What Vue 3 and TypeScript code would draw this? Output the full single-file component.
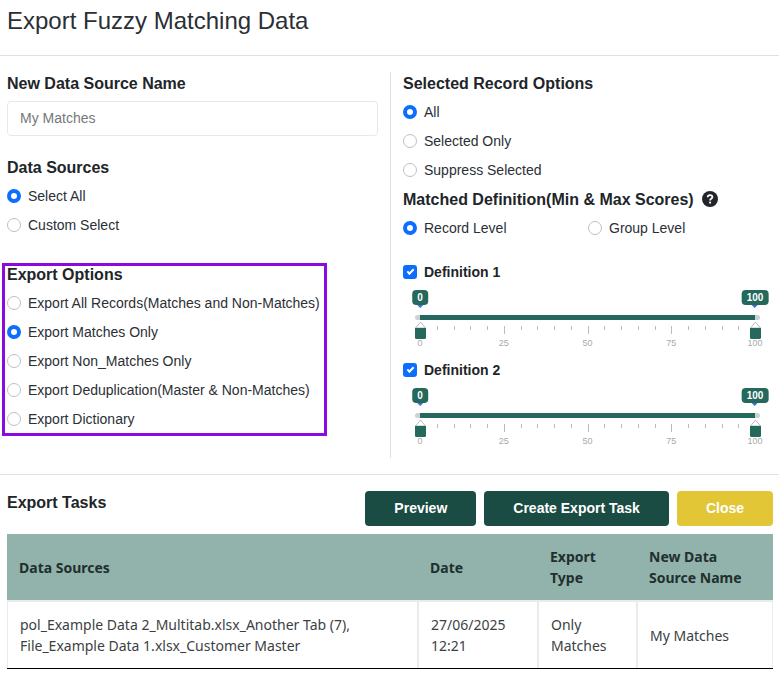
<script setup lang="ts">
import { reactive, ref } from 'vue'

interface Definition {
  id: number
  enabled: boolean
  min: number
  max: number
}

interface ExportTask {
  sources: string[]
  date: string
  type: string
  name: string
}

const sourceName = ref('')
const dataSource = ref('Select All')
const exportOption = ref('Export Matches Only')
const recordOption = ref('All')
const level = ref('Record Level')

const dataSources = ['Select All', 'Custom Select']
const exportOptions = [
  'Export All Records(Matches and Non-Matches)',
  'Export Matches Only',
  'Export Non_Matches Only',
  'Export Deduplication(Master & Non-Matches)',
  'Export Dictionary',
]
const recordOptions = ['All', 'Selected Only', 'Suppress Selected']
const levels = ['Record Level', 'Group Level']

const definitions = reactive<Definition[]>([
  { id: 1, enabled: true, min: 0, max: 100 },
  { id: 2, enabled: true, min: 0, max: 100 },
])

const ticks = Array.from({ length: 21 }, (_, i) => i * 5)

const tasks: ExportTask[] = [
  {
    sources: ['pol_Example Data 2_Multitab.xlsx_Another Tab (7),', 'File_Example Data 1.xlsx_Customer Master'],
    date: '27/06/2025 12:21',
    type: 'Only Matches',
    name: 'My Matches',
  },
]
</script>

<template>
  <main class="page">
    <header class="title-bar">
      <h1>Export Fuzzy Matching Data</h1>
    </header>

    <form class="columns" @submit.prevent>
      <div class="column left">
        <label class="heading" for="source-name">New Data Source Name</label>
        <input id="source-name" v-model="sourceName" class="text-box" type="text" placeholder="My Matches" />

        <fieldset class="sources">
          <legend class="heading">Data Sources</legend>
          <label v-for="o in dataSources" :key="o" class="option">
            <input v-model="dataSource" type="radio" name="data-source" :value="o" />
            <span>{{ o }}</span>
          </label>
        </fieldset>

        <fieldset class="highlight">
          <legend class="heading">Export Options</legend>
          <label v-for="o in exportOptions" :key="o" class="option">
            <input v-model="exportOption" type="radio" name="export-option" :value="o" />
            <span>{{ o }}</span>
          </label>
        </fieldset>
      </div>

      <div class="column right">
        <fieldset>
          <legend class="heading">Selected Record Options</legend>
          <label v-for="o in recordOptions" :key="o" class="option">
            <input v-model="recordOption" type="radio" name="record-option" :value="o" />
            <span>{{ o }}</span>
          </label>
        </fieldset>

        <fieldset class="matched">
          <legend class="heading with-icon">
            <span>Matched Definition(Min &amp; Max Scores)</span>
            <svg class="help" viewBox="0 0 16 16" aria-hidden="true">
              <circle cx="8" cy="8" r="8" fill="#212529" />
              <path d="M5.7 6.3C5.7 4.9 6.7 4.1 8 4.1s2.4.8 2.4 2c0 1.7-2.3 1.7-2.3 3.3" fill="none" stroke="#fff" stroke-width="1.8" />
              <circle cx="8.1" cy="11.6" r="1.1" fill="#fff" />
            </svg>
          </legend>
          <div class="levels">
            <label v-for="o in levels" :key="o" class="option">
              <input v-model="level" type="radio" name="level" :value="o" />
              <span>{{ o }}</span>
            </label>
          </div>
        </fieldset>

        <section v-for="d in definitions" :key="d.id" class="definition">
          <label class="option strong">
            <input v-model="d.enabled" type="checkbox" />
            <span>Definition {{ d.id }}</span>
          </label>
          <div class="slider">
            <div class="rail">
              <div class="fill" :style="{ left: d.min + '%', right: 100 - d.max + '%' }"></div>
              <output class="bubble" :style="{ left: d.min + '%' }">{{ d.min }}</output>
              <output class="bubble" :style="{ left: d.max + '%' }">{{ d.max }}</output>
              <template v-for="t in ticks" :key="t">
                <i class="tick" :class="{ major: t % 25 === 0 }" :style="{ left: t + '%' }"></i>
                <span v-if="t % 25 === 0" class="mark" :style="{ left: t + '%' }">{{ t }}</span>
              </template>
              <svg v-for="(v, i) in [d.min, d.max]" :key="i" class="thumb" :style="{ left: v + '%' }" viewBox="0 0 11 18">
                <path d="M.5 7 5.5 1l5 6z" fill="#fff" stroke="#b9b9c0" />
                <path d="M0 7h11v9.500a1.5 1.5 0 0 1-1.5 1.5h-8A1.5 1.5 0 0 1 0 16.500z" fill="#24695c" />
              </svg>
              <input v-model.number="d.min" class="range" type="range" min="0" max="100" :aria-label="`Definition ${d.id} minimum score`" />
              <input v-model.number="d.max" class="range" type="range" min="0" max="100" :aria-label="`Definition ${d.id} maximum score`" />
            </div>
          </div>
        </section>
      </div>
    </form>

    <section class="tasks">
      <div class="task-bar">
        <h2 class="heading">Export Tasks</h2>
        <div class="actions">
          <button type="button" class="btn">Preview</button>
          <button type="button" class="btn">Create Export Task</button>
          <button type="button" class="btn close">Close</button>
        </div>
      </div>
      <table>
        <colgroup>
          <col />
          <col class="c-date" />
          <col class="c-type" />
          <col class="c-name" />
        </colgroup>
        <thead>
          <tr>
            <th scope="col">Data Sources</th>
            <th scope="col">Date</th>
            <th scope="col">Export Type</th>
            <th scope="col">New Data Source Name</th>
          </tr>
        </thead>
        <tbody>
          <tr v-for="t in tasks" :key="t.date">
            <td><div v-for="s in t.sources" :key="s">{{ s }}</div></td>
            <td>{{ t.date }}</td>
            <td>{{ t.type }}</td>
            <td>{{ t.name }}</td>
          </tr>
        </tbody>
      </table>
    </section>
  </main>
</template>

<style>
body {
  background: #fff;
}
</style>

<style scoped>
.page {
  font-family: 'Liberation Sans', Arial, sans-serif;
  font-size: 14px;
  color: #2b2f36;
}
.page *,
.page *::before,
.page *::after {
  box-sizing: border-box;
}
.title-bar {
  padding: 5px 7px 18px;
  border-bottom: 1px solid #dee2e6;
}
h1 {
  margin: 0;
  font-size: 24px;
  font-weight: 400;
  line-height: 32px;
}
.heading {
  display: block;
  margin: 0;
  padding: 0 0 4px;
  font-size: 16px;
  font-weight: 700;
  line-height: 18px;
  color: #212529;
}
.columns {
  display: grid;
  grid-template-columns: 390fr 389fr;
  padding: 16px 0;
  border-bottom: 1px solid #dee2e6;
}
.column {
  padding-top: 3px;
}
.left {
  padding-left: 7px;
  padding-right: 12px;
}
.right {
  padding-left: 12px;
  padding-right: 6px;
  padding-bottom: 5px;
  border-left: 1px solid #dee2e6;
}
fieldset {
  min-width: 0;
  margin: 0;
  padding: 0;
  border: 0;
}
.text-box {
  display: block;
  width: 100%;
  height: 35px;
  margin-top: 4px;
  padding: 0 12px 2px;
  border: 1px solid #e6e9ec;
  border-radius: 4px;
  font: inherit;
  color: #2b2f36;
  background: #fff;
}
.text-box::placeholder {
  color: #75787c;
}
.sources {
  margin-top: 23px;
}
.highlight {
  width: fit-content;
  margin: 24px 0 0 -5px;
  padding: 0 4px 0 2px;
  border: 3px solid #8a0be0;
}
.highlight .heading {
  float: left;
  width: 100%;
}
.highlight .option {
  clear: both;
}
.option {
  display: flex;
  align-items: center;
  gap: 7px;
  height: 29px;
}
.option input {
  appearance: none;
  flex: none;
  width: 14px;
  height: 14px;
  margin: 0;
  border: 1px solid #bfbfbf;
  border-radius: 50%;
  background: #fff;
}
.option input:checked {
  border: 4px solid #0d6efd;
}
.option input[type='checkbox'] {
  position: relative;
  border-radius: 3px;
}
.option input[type='checkbox']:checked {
  border: 0;
  background: #0d6efd;
}
.option input[type='checkbox']:checked::after {
  content: '';
  position: absolute;
  left: 4px;
  top: 4px;
  width: 7px;
  height: 4px;
  border: solid #fff;
  border-width: 0 0 2px 2px;
  transform: rotate(-45deg);
}
.strong {
  font-weight: 700;
  color: #212529;
}
.matched {
  margin: 7px 0 15px;
}
.with-icon {
  display: flex;
  align-items: flex-start;
  gap: 8px;
}
.help {
  width: 16px;
  height: 16px;
}
.levels {
  display: grid;
  grid-template-columns: 1fr 1fr;
}
.slider {
  height: 69px;
  padding: 29px 18px 0 17px;
}
.rail {
  position: relative;
  height: 5px;
}
.rail::before {
  content: '';
  position: absolute;
  inset: 0 -5px;
  border-radius: 3px;
  background: #ccd3d4;
}
.fill {
  position: absolute;
  top: 0;
  bottom: 0;
  background: #24695c;
}
.bubble {
  position: absolute;
  top: -25px;
  padding: 0 5px;
  border-radius: 4px;
  background: #24695c;
  color: #fff;
  font-size: 10px;
  font-weight: 700;
  line-height: 15px;
  transform: translateX(-50%);
}
.bubble::after {
  content: '';
  position: absolute;
  top: 15px;
  left: 50%;
  margin-left: -3px;
  border: 3px solid transparent;
  border-top-color: #3e6fd0;
}
.tick {
  position: absolute;
  top: 11px;
  width: 1px;
  height: 4px;
  background: #bcbcbc;
}
.tick.major {
  height: 8px;
}
.mark {
  position: absolute;
  top: 22px;
  font-size: 9px;
  line-height: 12px;
  color: #a9a9a9;
  transform: translateX(-50%);
}
.thumb {
  position: absolute;
  top: 6px;
  width: 11px;
  height: 18px;
  margin-left: -5px;
}
.range {
  position: absolute;
  left: -5px;
  top: 6px;
  width: calc(100% + 10px);
  height: 18px;
  margin: 0;
  opacity: 0;
  pointer-events: none;
}
.range::-webkit-slider-thumb {
  pointer-events: auto;
}
.tasks {
  padding: 16px 6px 0 7px;
}
.task-bar {
  display: flex;
  align-items: flex-start;
  justify-content: space-between;
  padding-bottom: 8px;
}
.task-bar .heading {
  padding: 3px 0 0;
}
.actions {
  display: flex;
  gap: 8px;
}
.btn {
  height: 35px;
  padding: 0 29px 2px;
  border: 0;
  border-radius: 4px;
  background: #1b4c43;
  color: #fff;
  font: inherit;
  font-weight: 700;
}
.btn.close {
  background: #e2c636;
}
table {
  width: 100%;
  table-layout: fixed;
  border-collapse: separate;
  border-spacing: 0;
  border-bottom: 1px solid #000;
  font-family: 'Noto Sans', sans-serif;
  font-size: 14px;
  line-height: 21px;
}
.c-date {
  width: 120px;
}
.c-type {
  width: 99px;
}
.c-name {
  width: 137px;
}
th {
  padding: 12px 12px 12px 13px;
  background: #91b3ac;
  color: #212f2e;
  font-weight: 700;
  text-align: left;
}
th:first-child {
  padding-left: 12px;
}
td {
  padding: 12px;
  border: solid #e8eced;
  border-width: 2px 0 0 2px;
  color: #3b3f44;
}
td:first-child {
  border-left-width: 1px;
}
td:last-child {
  border-right-width: 1px;
}
</style>
